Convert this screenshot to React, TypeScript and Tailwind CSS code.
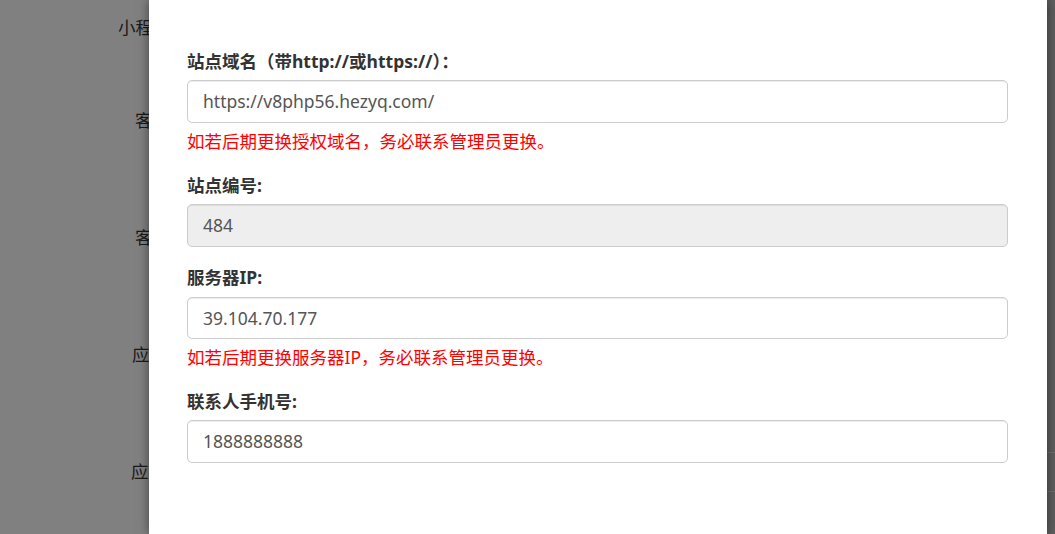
const font = { fontFamily: '"Noto Sans", "Noto Sans CJK SC", sans-serif' };

function Field({
  label,
  value,
  disabled,
  hint,
}: {
  label: string;
  value: string;
  disabled?: boolean;
  hint?: string;
}) {
  return (
    <div className="mb-[18.75px]">
      <label className="block mb-[6.25px] font-bold text-[#333] text-[17.5px] leading-[25px]">{label}</label>
      <div
        className={`h-[42.5px] px-[15px] flex items-center rounded-[5px] border border-[#ccc] text-[17.5px] text-[#555] shadow-[inset_0_1px_1px_rgba(0,0,0,0.075)] ${
          disabled ? 'bg-[#eee]' : 'bg-white'
        }`}
      >
        {value}
      </div>
      {hint && <p className="mt-[6.25px] text-[17.5px] leading-[25px] text-[#ff0000]">{hint}</p>}
    </div>
  );
}

export default function App() {
  // page labels peeking out from under the modal
  const behind = [
    { text: '小程', pl: 'pl-[118px]', mt: 'mt-[15px]' },
    { text: '客', pl: 'pl-[135px]', mt: 'mt-[68px]' },
    { text: '客', pl: 'pl-[135px]', mt: 'mt-[92px]' },
    { text: '应', pl: 'pl-[132px]', mt: 'mt-[92px]' },
    { text: '应', pl: 'pl-[131px]', mt: 'mt-[92px]' },
  ];

  return (
    <div className="w-[1055px] h-[534px] flex overflow-hidden bg-[#808080]" style={font}>
      <div className="w-[149px] shrink-0 overflow-hidden flex flex-col">
        {behind.map((b, i) => (
          <div key={i} className={`${b.pl} ${b.mt} whitespace-nowrap text-[17.5px] leading-[25px] text-[#1a1a1a]`}>
            {b.text}
          </div>
        ))}
      </div>

      {/* modal */}
      <div className="flex-1 bg-white pt-[49px] pl-[38px] pr-[39px] shadow-[0_0_10px_rgba(0,0,0,0.5)] relative z-10">
        <Field
          label="站点域名（带http://或https://）："
          value="https://v8php56.hezyq.com/"
          hint="如若后期更换授权域名，务必联系管理员更换。"
        />
        <Field label="站点编号:" value="484" disabled />
        <Field
          label="服务器IP:"
          value="39.104.70.177"
          hint="如若后期更换服务器IP，务必联系管理员更换。"
        />
        <Field label="联系人手机号:" value="1888888888" />
      </div>

      {/* scrollbar under backdrop */}
      <div className="w-[8px] shrink-0 bg-[#5f5f5f] flex flex-col">
        <div className="mt-[452px] h-[40px] border-y border-[#707070]" />
      </div>
    </div>
  );
}
